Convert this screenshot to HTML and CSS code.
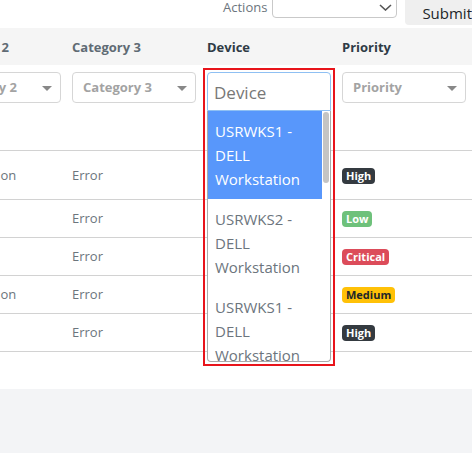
FILE: index.html
```html
<!DOCTYPE html>
<html lang="en">
<head>
<meta charset="utf-8">
<title>Incident filters</title>
<link rel="stylesheet" href="styles.css">
</head>
<body>
<div class="page">
  <div class="toolbar">
    <label class="toolbar-label">Actions</label>
    <div class="action-select">
      <svg class="chevron" width="13" height="7" viewBox="0 0 13 7"><path d="M1 1l5.5 5 5.5-5" fill="none" stroke="#555" stroke-width="1.6"/></svg>
    </div>
    <button class="submit">Submit</button>
  </div>

  <table class="grid">
    <thead>
      <tr class="head-row">
        <th>Category 1</th>
        <th>Category 2</th>
        <th class="muted">Category 3</th>
        <th>Device</th>
        <th>Priority</th>
        <th>Status</th>
      </tr>
      <tr class="filter-row">
        <td><div class="filter">Category 1<span class="caret"></span></div></td>
        <td><div class="filter">Category 2<span class="caret"></span></div></td>
        <td><div class="filter">Category 3<span class="caret"></span></div></td>
        <td class="device-cell">
          <div class="dropdown">
            <div class="search">Device</div>
            <div class="listbox">
              <ul class="options">
                <li class="option selected">USRWKS1 -<br>DELL<br>Workstation</li>
                <li class="option">USRWKS2 -<br>DELL<br>Workstation</li>
                <li class="option">USRWKS1 -<br>DELL<br>Workstation</li>
              </ul>
              <div class="track"><div class="thumb"></div></div>
            </div>
          </div>
        </td>
        <td><div class="filter">Priority<span class="caret"></span></div></td>
        <td><div class="filter">Status<span class="caret"></span></div></td>
      </tr>
    </thead>
    <tbody>
      <tr>
        <td>Network</td><td>Classification</td><td>Error</td><td></td>
        <td><span class="badge high">High</span></td><td>Open</td>
      </tr>
      <tr>
        <td>Hardware</td><td></td><td>Error</td><td></td>
        <td><span class="badge low">Low</span></td><td>Open</td>
      </tr>
      <tr>
        <td>Hardware</td><td></td><td>Error</td><td></td>
        <td><span class="badge critical">Critical</span></td><td>Open</td>
      </tr>
      <tr>
        <td>Network</td><td>Classification</td><td>Error</td><td></td>
        <td><span class="badge medium">Medium</span></td><td>Open</td>
      </tr>
      <tr>
        <td>Software</td><td></td><td>Error</td><td></td>
        <td><span class="badge high">High</span></td><td>Open</td>
      </tr>
    </tbody>
  </table>
</div>
<footer class="footer"></footer>
</body>
</html>
```

FILE: styles.css
```css
* { box-sizing: border-box; }

html, body {
  margin: 0;
  padding: 0;
  background: #fff;
  overflow: hidden;
}

body {
  font-family: "Open Sans", "Noto Sans", sans-serif;
  color: #212529;
}

/* the page is wider than the window and scrolled sideways */
.page {
  width: 810px;
  margin-left: -208px;
}

/* top action bar */
.toolbar {
  width: 696px;
  height: 28px;
  display: flex;
  justify-content: flex-end;
  align-items: flex-start;
  background: #fff;
}

.toolbar-label {
  font-size: 13px;
  line-height: 14px;
  color: #6c757d;
  margin-right: 5px;
}

.action-select {
  width: 125px;
  height: 28px;
  margin-top: -10px;
  border: 1px solid #c9c9c9;
  border-radius: 4px;
  display: flex;
  justify-content: flex-end;
  align-items: center;
  padding-right: 4px;
}

.chevron { display: block; margin-top: 6px; }

.submit {
  margin-left: 8px;
  height: 29px;
  margin-top: -4px;
  padding: 4px 16px 0 17px;
  border: none;
  border-radius: 4px;
  background: #efefef;
  font-family: inherit;
  font-size: 15px;
  color: #212529;
}

/* data grid */
.grid {
  border-collapse: collapse;
  table-layout: fixed;
  width: 810px;
}

.grid th,
.grid td {
  width: 135px;
  padding: 0 0 0 10px;
  text-align: left;
  vertical-align: middle;
}

.head-row {
  background: #f5f5f5;
  height: 37px;
}

.head-row th {
  font-size: 13px;
  font-weight: 700;
  color: #2f3b46;
  white-space: nowrap;
}

.head-row th.muted,
.head-row th:nth-child(2) { color: #606b74; }

.head-row th:nth-child(2) { padding-left: 13px; }

.filter-row { height: 85px; }

.filter-row td {
  vertical-align: top;
  padding-top: 7px;
}

.filter {
  position: relative;
  width: 124px;
  height: 31px;
  border: 1px solid #d6d6d6;
  border-radius: 4px;
  padding-left: 10px;
  font-size: 13px;
  font-weight: 700;
  line-height: 29px;
  color: #a3a3a3;
  white-space: nowrap;
  overflow: hidden;
}

.caret {
  position: absolute;
  right: 8px;
  top: 13px;
  width: 0;
  height: 0;
  border-left: 5px solid transparent;
  border-right: 5px solid transparent;
  border-top: 5px solid #888;
}

/* open device picker */
.device-cell { position: relative; }

.dropdown {
  position: absolute;
  top: 7px;
  left: 10px;
  width: 124px;
  outline: 2px solid #e8141b;
  outline-offset: 2px;
  background: #fff;
  z-index: 2;
}

.search {
  height: 39px;
  border: 1px solid #8fc0f3;
  border-radius: 4px 4px 0 0;
  padding-left: 6px;
  font-size: 17px;
  line-height: 39px;
  color: #777;
  font-weight: 400;
}

.listbox {
  height: 251px;
  border: 1px solid #aaa;
  border-top: none;
  border-radius: 0 0 4px 4px;
  display: flex;
  overflow: hidden;
}

.options {
  list-style: none;
  margin: 0;
  padding: 0;
  flex: 1;
}

.option {
  padding: 8px 7px;
  font-size: 15px;
  line-height: 24px;
  color: #6c757d;
}

.option.selected {
  background: #5897fb;
  color: #fff;
}

.track {
  width: 8px;
  padding: 1px 1px 0 1px;
}

.thumb {
  height: 71px;
  border-radius: 3px;
  background: #c4c4c4;
}

/* body rows */
.grid tbody tr {
  height: 38px;
  border-top: 1px solid #d2d2d2;
}

.grid tbody tr:first-child { height: 49px; }
.grid tbody tr:last-child { border-bottom: 1px solid #d2d2d2; }

.grid tbody td {
  font-size: 13px;
  color: #6c757d;
  white-space: nowrap;
  overflow: hidden;
}

.badge {
  display: inline-block;
  padding: 0 4px;
  height: 16px;
  line-height: 16px;
  border-radius: 4px;
  font-size: 11px;
  font-weight: 700;
  color: #fff;
  vertical-align: middle;
}

.badge.high { background: #343a40; }
.badge.low { background: #6ec17b; }
.badge.critical { background: #dc4c5a; }
.badge.medium { background: #ffc107; color: #212529; }

.footer {
  margin-top: 37px;
  height: 80px;
  background: #f3f4f6;
}
```
